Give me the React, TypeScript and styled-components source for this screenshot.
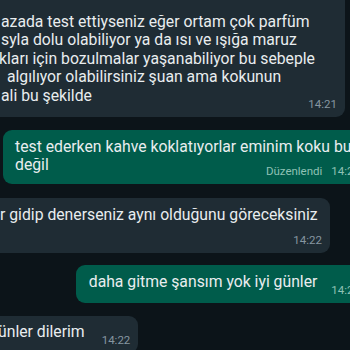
import React from "react";
import styled, { createGlobalStyle } from "styled-components";

const GlobalStyle = createGlobalStyle`
  html, body {
    margin: 0;
    padding: 0;
    background: #0b141a;
  }
  body {
    font-family: Roboto, "Noto Sans", sans-serif;
  }
`;

const Screen = styled.div`
  width: 350px;
  height: 350px;
  overflow: hidden;
  background: #0c1419;
`;

const Feed = styled.div`
  display: flex;
  flex-direction: column;
`;

const Row = styled.div<{ $out?: boolean; $gap: number }>`
  display: flex;
  justify-content: ${(p) => (p.$out ? "flex-end" : "flex-start")};
  margin-top: ${(p) => p.$gap}px;
  margin-left: ${(p) => (p.$out ? 0 : -8)}px;
  margin-right: ${(p) => (p.$out ? -18 : 0)}px;
`;

const Bubble = styled.div<{
  $out?: boolean;
  $inline?: boolean;
  $width?: number;
  $pad: string;
}>`
  box-sizing: border-box;
  display: flex;
  flex-direction: ${(p) => (p.$inline ? "row" : "column")};
  align-items: ${(p) => (p.$inline ? "flex-end" : "stretch")};
  width: ${(p) => (p.$width ? `${p.$width}px` : "auto")};
  padding: ${(p) => p.$pad};
  border-radius: 9px;
  background: ${(p) => (p.$out ? "#005c4b" : "#1f2c34")};
  color: #e9edef;
`;

const Text = styled.div`
  font-size: 15.75px;
  line-height: 18.5px;
  white-space: nowrap;
`;

const Line = styled.div<{ $shift?: number }>`
  margin-left: ${(p) => p.$shift ?? 0}px;
`;

const Meta = styled.div<{ $out?: boolean; $pull?: number; $drop?: number; $lead?: number }>`
  align-self: flex-end;
  font-size: 11.5px;
  line-height: 14px;
  white-space: nowrap;
  color: ${(p) => (p.$out ? "#8fc1b4" : "#8696a0")};
  margin-top: ${(p) => p.$pull ?? 0}px;
  margin-bottom: ${(p) => -(p.$drop ?? 0)}px;
  margin-left: ${(p) => p.$lead ?? 0}px;
`;

const Edited = styled.span`
  margin-right: 9px;
`;

export default function App() {
  return (
    <>
      <GlobalStyle />
      <Screen>
        <Feed>
          <Row $gap={-10}>
            <Bubble $width={353} $pad="22.5px 8px 5.75px 9px">
              <Text>
                <Line>azada test ettiyseniz eğer ortam çok parfüm</Line>
                <Line>syla dolu olabiliyor ya da ısı ve ışığa maruz</Line>
                <Line $shift={-2}>kları için bozulmalar yaşanabiliyor bu sebeple</Line>
                <Line $shift={2}>&nbsp;algılıyor olabilirsiniz şuan ama kokunun</Line>
                <Line>ali bu şekilde</Line>
              </Text>
              <Meta $pull={-7.75}>14:21</Meta>
            </Bubble>
          </Row>

          <Row $out $gap={13}>
            <Bubble $out $width={365} $pad="7.5px 8px 5.75px 12px">
              <Text>
                <Line>test ederken kahve koklatıyorlar eminim koku bu</Line>
                <Line>değil</Line>
              </Text>
              <Meta $out $pull={-10.75}>
                <Edited>Düzenlendi</Edited>14:22
              </Meta>
            </Bubble>
          </Row>

          <Row $gap={14}>
            <Bubble $width={338} $pad="8.5px 8px 5.75px 8px">
              <Text>
                <Line>r gidip denerseniz aynı olduğunu göreceksiniz</Line>
              </Text>
              <Meta $pull={8.25}>14:22</Meta>
            </Bubble>
          </Row>

          <Row $out $gap={12}>
            <Bubble $out $inline $pad="8.5px 8px 11px 13px">
              <Text>daha gitme şansım yok iyi günler</Text>
              <Meta $out $drop={5.25} $lead={14}>
                14:22
              </Meta>
            </Bubble>
          </Row>

          <Row $gap={13}>
            <Bubble $inline $pad="7.5px 8px 11px 6px">
              <Text>ünler dilerim</Text>
              <Meta $drop={5.25} $lead={17}>
                14:22
              </Meta>
            </Bubble>
          </Row>
        </Feed>
      </Screen>
    </>
  );
}
